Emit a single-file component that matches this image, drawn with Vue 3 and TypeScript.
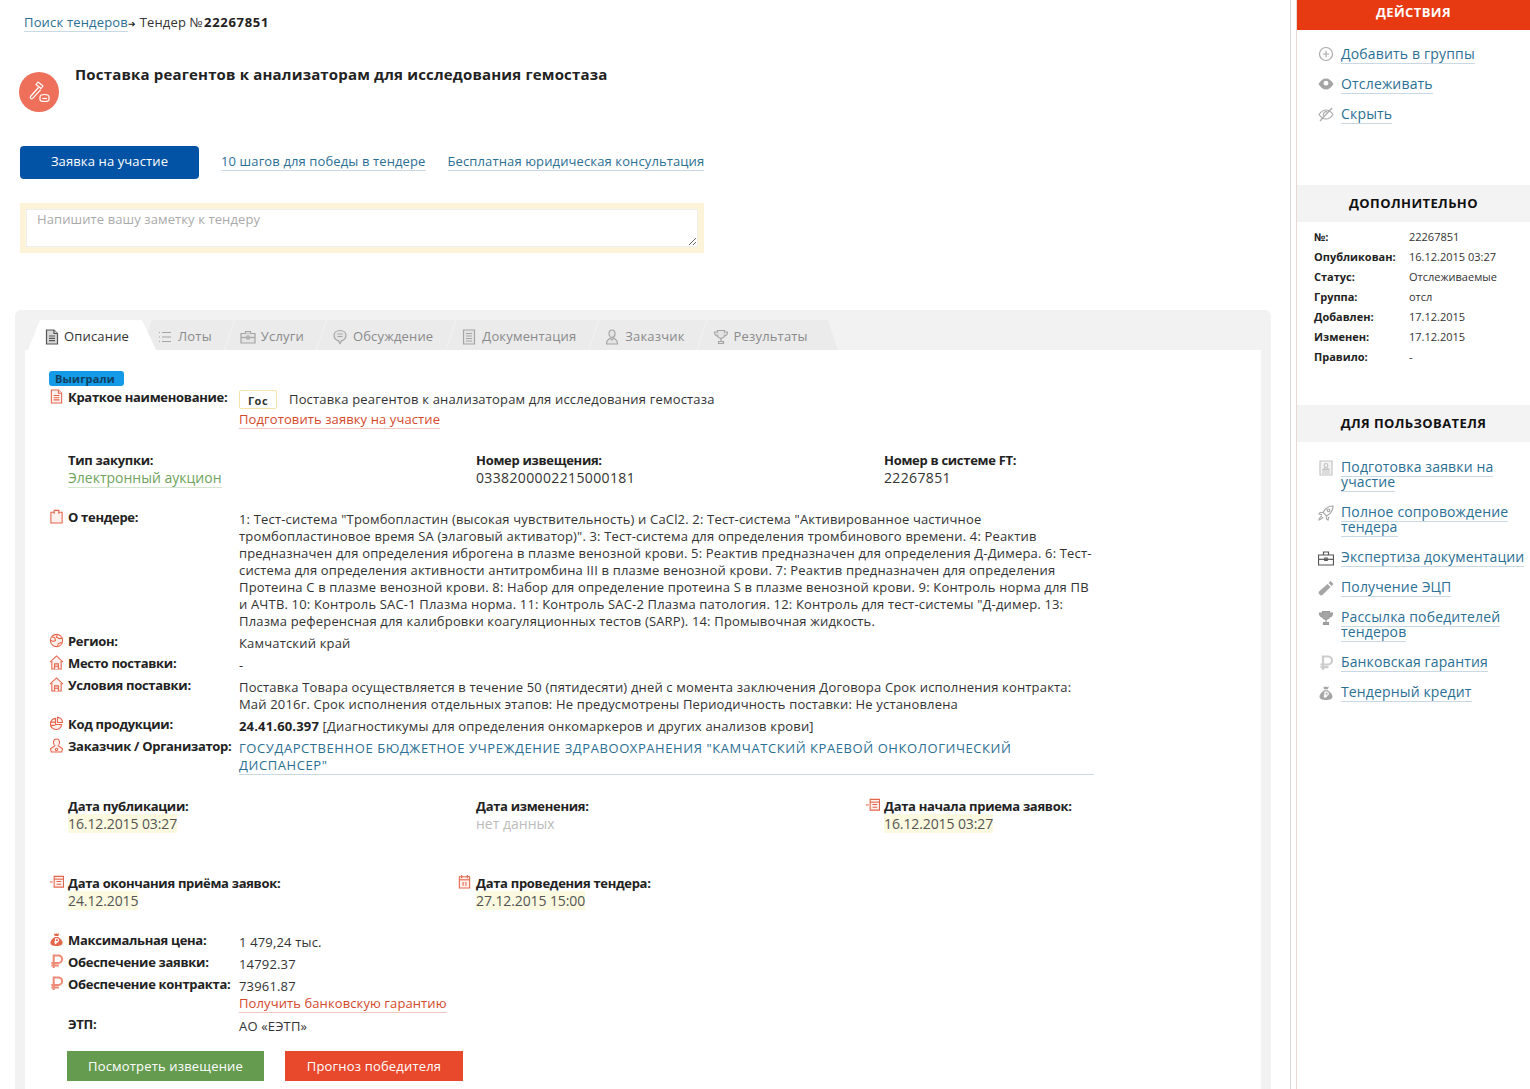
<script setup lang="ts">
const I: Record<string, string[]> = {
  doc: ['M2.500 1h7.500l3.500 3.500V15h-11z', 'M10 1v3.500h3.500', 'M5 7h6M5 9.300h6M5 11.600h6'],
  lots: ['M2 3.500h1M2 8h1M2 12.500h1', 'M5 3.500h9M5 8h9M5 12.500h9'],
  box: ['M1 4.500h14v9.500H1z', 'M5.500 4.500v-2h5v2', 'M1 8.500h14', 'M7 7h2v3H7z'],
  chat: ['M8 1.500c3.600 0 6 2.200 6 5s-2.400 5-4.500 5.400L8 14.500 6.500 11.900C4.400 11.500 2 9.300 2 6.500s2.400-5 6-5z', 'M5.500 5h5M5.500 7.500h5'],
  page: ['M2.500 1h11v14h-11z', 'M5 4.500h6M5 7h6M5 9.500h6M5 12h6'],
  user: ['M8 1c1.900 0 3 1.400 3 3.400S9.900 8.500 8 8.500 5 6.400 5 4.400 6.100 1 8 1z', 'M2.500 15c0-3.300 2-5 3.800-5.800L8 11l1.700-1.800c1.800.8 3.800 2.500 3.800 5.800z'],
  cup: ['M4.500 1.500h7v4c0 2.300-1.500 3.800-3.500 3.800S4.500 7.800 4.500 5.500z', 'M4.500 3H1.500c0 2.500 1.200 3.800 3.300 4M11.500 3h3c0 2.500-1.200 3.800-3.300 4', 'M8 9.300v3M5.500 14.500h5v-2h-5z'],
  globe: ['M8 1.500a6.500 6.500 0 1 0 0 13a6.500 6.500 0 0 0 0-13z', 'M3 4l3 1 1 3-2 1-3-1M9 1.800l-1 2.700 3 1.500 3.300-.5M9 14.300l1-3 2.500-1 1.500.8'],
  home: ['M1 7.500L8 1l7 6.500', 'M3 6v9h10V6', 'M6 15V9.500h4V15', 'M6 12h4'],
  pie: ['M7 2.500a6 6 0 1 0 6.500 6.500H7z', 'M9 1.500a5.500 5.500 0 0 1 5.500 5.500H9z', 'M1.500 6.500h5M1.500 10h5'],
  person: ['M8 1c2 0 3.200 1.500 3.200 3.500S10 9 8 9 4.800 6.500 4.800 4.500 6 1 8 1z', 'M6 8.500L1.500 11.500l1 3.500h11l1-3.500L10 8.500', 'M8 11a1.200 1.200 0 1 0 0 2.400A1.200 1.200 0 0 0 8 11z'],
  cal: ['M2.500 3h11v12h-11z', 'M5 1v3.500M11 1v3.500', 'M2.500 6.200h11', 'M6.500 8.500v4M9.500 8.500v4'],
  calin: ['M5.500 2.500h10v11.500h-10z', 'M5.500 5.500h10', 'M8 8h5M8 11h5', 'M4 8.500H1'],
  rub: ['M5 15V1.500h5a4 4 0 0 1 0 8H2.500M2.500 12.200h8'],
  plus: ['M8 1.500a6.500 6.500 0 1 0 0 13a6.500 6.500 0 0 0 0-13z', 'M8 4.800v6.400M4.800 8h6.400'],
  hide: ['M1 8.500c2-3 4.200-4.500 7-4.500s5 1.500 7 4.500c-2 3-4.200 4.500-7 4.500s-5-1.500-7-4.500z', 'M2 15L14 2', 'M5.500 10a3 3 0 0 1 4-4'],
  form: ['M2 1h12v14H2z', 'M8 3.500c1.100 0 1.800.8 1.800 1.800S9.100 7.500 8 7.500 6.200 6.300 6.200 5.300 6.900 3.500 8 3.500z', 'M5 9.500c.5-1 1.500-1.500 3-1.500s2.500.5 3 1.500z', 'M4 11h8M4 13h8'],
  rocket: ['M15 1c-4 0-7.500 2-10 6.500L8.500 11C13 8.500 15 5 15 1z', 'M5 7.500H2l-1 1.500 3 .8M8.500 11v3l1.500 1 .8-3', 'M4 11c-1.500.5-2.500 1.800-3 4 2.200-.5 3.500-1.500 4-3', 'M10.500 4a1.300 1.300 0 1 0 .01 0'],
  case: ['M.5 5h15v10H.5z', 'M5.500 5V2h5v3', 'M.5 9.300h15', 'M6.800 8h2.400v2.400H6.800z']
}
const bagBody = 'M5 1.200l1.800 1 1.200-1 1.200 1 1.800-1-1.200 3h-3.600zM6.300 5.200C3.500 7 1.500 9.300 1.500 11.500c0 2.500 2.500 3.500 6.500 3.500s6.500-1 6.500-3.500c0-2.200-2-4.500-4.800-6.300z'
const bagMark = 'M7 13V7.200h1.800a1.500 1.500 0 0 1 0 3H5.800M5.800 11.500h3.200'
const tabs = [
  { t: 'Описание', i: 'doc' }, { t: 'Лоты', i: 'lots' }, { t: 'Услуги', i: 'box' },
  { t: 'Обсуждение', i: 'chat' }, { t: 'Документация', i: 'page' }, { t: 'Заказчик', i: 'user' }, { t: 'Результаты', i: 'cup' }
]
const infoRows = [
  ['№:', '22267851'], ['Опубликован:', '16.12.2015 03:27'], ['Статус:', 'Отслеживаемые'], ['Группа:', 'отсл'],
  ['Добавлен:', '17.12.2015'], ['Изменен:', '17.12.2015'], ['Правило:', '-']
]
const userLinks = [
  { t: 'Подготовка заявки на участие', i: 'form' }, { t: 'Полное сопровождение тендера', i: 'rocket' },
  { t: 'Экспертиза документации', i: 'case' }, { t: 'Получение ЭЦП', i: 'usb' },
  { t: 'Рассылка победителей тендеров', i: 'cup' }, { t: 'Банковская гарантия', i: 'rub' }, { t: 'Тендерный кредит', i: 'bag' }
]
const desc = '1: Тест-система "Тромбопластин (высокая чувствительность) и CaCl2. 2: Тест-система "Активированное частичное тромбопластиновое время SA (элаговый активатор)". 3: Тест-система для определения тромбинового времени. 4: Реактив предназначен для определения иброгена в плазме венозной крови. 5: Реактив предназначен для определения Д-Димера. 6: Тест-система для определения активности антитромбина III в плазме венозной крови. 7: Реактив предназначен для определения Протеина С в плазме венозной крови. 8: Набор для определение протеина S в плазме венозной крови. 9: Контроль норма для ПВ и АЧТВ. 10: Контроль SAC-1 Плазма норма. 11: Контроль SAC-2 Плазма патология. 12: Контроль для тест-системы "Д-димер. 13: Плазма референсная для калибровки коагуляционных тестов (SARP). 14: Промывочная жидкость.'
</script>

<template>
  <div class="page">
    <main class="main">
      <div class="crumbs"><a class="lnk">Поиск тендеров</a><span class="arr">➔</span> Тендер №<b>22267851</b></div>
      <div class="head">
        <div class="circle">
          <svg viewBox="0 0 24 24" class="gavel" fill="none" stroke="#fff" stroke-width="1.200" stroke-linejoin="round">
            <path d="M11 2l5 4-2 2.500-5-4z" /><path d="M11.500 7.500L3.500 16.500c-1 1.300 1 3 2.200 1.800l8-8.600" />
            <path d="M13 17c0-1.500 2-2.500 4.500-2.500S22 15.500 22 17v2.500c0 1-2 2-4.500 2S13 20.500 13 19.500z" /><path d="M15.500 18.500h4.500" />
          </svg>
        </div>
        <h1 class="title">Поставка реагентов к анализаторам для исследования гемостаза</h1>
      </div>
      <div class="actions">
        <button class="btn-blue">Заявка на участие</button>
        <a class="lnk">10 шагов для победы в тендере</a>
        <a class="lnk">Бесплатная юридическая консультация</a>
      </div>
      <div class="note"><textarea placeholder="Напишите вашу заметку к тендеру"></textarea></div>

      <section class="card">
        <nav class="tabs">
          <div v-for="(x, n) in tabs" :key="x.t" class="tab" :class="{ active: n === 0 }">
            <svg viewBox="0 0 16 16" class="ti"><path v-for="d in I[x.i]" :key="d" :d="d" /></svg>{{ x.t }}
          </div>
        </nav>
        <div class="body">
          <div class="won">Выиграли</div>

          <div class="row first">
            <svg viewBox="0 0 16 16" class="ic"><path v-for="d in I.doc" :key="d" :d="d" /></svg>
            <b>Краткое наименование:</b>
            <div>
              <div class="gos-line"><span class="gos">Гос</span>Поставка реагентов к анализаторам для исследования гемостаза</div>
              <a class="lnk red">Подготовить заявку на участие</a>
            </div>
          </div>

          <div class="cols c1">
            <div class="col"><b>Тип закупки:</b><div class="big"><a class="lnk green">Электронный аукцион</a></div></div>
            <div class="col"><b>Номер извещения:</b><div class="big num">0338200002215000181</div></div>
            <div class="col"><b>Номер в системе FT:</b><div class="big num">22267851</div></div>
          </div>

          <div class="rows">
            <div class="row about">
              <svg viewBox="0 0 16 16" class="ic"><path d="M2 3.500h12v11.500H2z" /><path d="M5.500 5V1.500h5V5" /></svg>
              <b>О тендере:</b><div>{{ desc }}</div>
            </div>
            <div class="row"><svg viewBox="0 0 16 16" class="ic"><path v-for="d in I.globe" :key="d" :d="d" /></svg><b>Регион:</b><div>Камчатский край</div></div>
            <div class="row"><svg viewBox="0 0 16 16" class="ic"><path v-for="d in I.home" :key="d" :d="d" /></svg><b>Место поставки:</b><div>-</div></div>
            <div class="row"><svg viewBox="0 0 16 16" class="ic"><path v-for="d in I.home" :key="d" :d="d" /></svg><b>Условия поставки:</b><div>Поставка Товара осуществляется в течение 50 (пятидесяти) дней с момента заключения Договора Срок исполнения контракта: Май 2016г. Срок исполнения отдельных этапов: Не предусмотрены Периодичность поставки: Не установлена</div></div>
            <div class="row"><svg viewBox="0 0 16 16" class="ic"><path v-for="d in I.pie" :key="d" :d="d" /></svg><b>Код продукции:</b><div><strong>24.41.60.397</strong> [Диагностикумы для определения онкомаркеров и других анализов крови]</div></div>
            <div class="row"><svg viewBox="0 0 16 16" class="ic"><path v-for="d in I.person" :key="d" :d="d" /></svg><b>Заказчик / Организатор:</b><div class="org">ГОСУДАРСТВЕННОЕ БЮДЖЕТНОЕ УЧРЕЖДЕНИЕ ЗДРАВООХРАНЕНИЯ "КАМЧАТСКИЙ КРАЕВОЙ ОНКОЛОГИЧЕСКИЙ ДИСПАНСЕР"</div></div>
          </div>

          <div class="cols c2">
            <div class="col"><b>Дата публикации:</b><div class="big"><mark>16.12.2015 03:27</mark></div></div>
            <div class="col"><b>Дата изменения:</b><div class="big none">нет данных</div></div>
            <div class="col"><svg viewBox="0 0 16 16" class="ic abs"><path v-for="d in I.calin" :key="d" :d="d" /></svg><b>Дата начала приема заявок:</b><div class="big"><mark>16.12.2015 03:27</mark></div></div>
          </div>
          <div class="cols c3">
            <div class="col"><svg viewBox="0 0 16 16" class="ic abs"><path v-for="d in I.calin" :key="d" :d="d" /></svg><b>Дата окончания приёма заявок:</b><div class="big"><mark>24.12.2015</mark></div></div>
            <div class="col"><svg viewBox="0 0 16 16" class="ic abs"><path v-for="d in I.cal" :key="d" :d="d" /></svg><b>Дата проведения тендера:</b><div class="big"><mark>27.12.2015 15:00</mark></div></div>
          </div>

          <div class="rows money">
            <div class="row"><svg viewBox="0 0 16 16" class="ic solid"><path :d="bagBody" /><path class="mark" :d="bagMark" /></svg><b>Максимальная цена:</b><div>1 479,24 тыс.</div></div>
            <div class="row"><svg viewBox="0 0 16 16" class="ic rubi"><path v-for="d in I.rub" :key="d" :d="d" /></svg><b>Обеспечение заявки:</b><div>14792.37</div></div>
            <div class="row"><svg viewBox="0 0 16 16" class="ic rubi"><path v-for="d in I.rub" :key="d" :d="d" /></svg><b>Обеспечение контракта:</b><div>73961.87<br /><a class="lnk red get">Получить банковскую гарантию</a></div></div>
            <div class="row"><i></i><b>ЭТП:</b><div>АО «ЕЭТП»</div></div>
          </div>

          <div class="btns">
            <button class="b-green">Посмотреть извещение</button>
            <button class="b-red">Прогноз победителя</button>
          </div>
        </div>
      </section>
    </main>

    <aside class="side">
      <h2 class="red-h">ДЕЙСТВИЯ</h2>
      <ul class="acts">
        <li><svg viewBox="0 0 16 16" class="si"><path v-for="d in I.plus" :key="d" :d="d" /></svg><a class="lnk">Добавить в группы</a></li>
        <li>
          <svg viewBox="0 0 16 16" class="si fillg"><path d="M0.500 8C2.500 4.500 5 2.500 8 2.500S13.500 4.500 15.500 8c-2 3.500-4.500 5.500-7.500 5.500S2.500 11.500 0.500 8z" /><circle cx="8" cy="7.200" r="2.400" fill="#fff" /></svg>
          <a class="lnk">Отслеживать</a>
        </li>
        <li><svg viewBox="0 0 16 16" class="si"><path v-for="d in I.hide" :key="d" :d="d" /></svg><a class="lnk">Скрыть</a></li>
      </ul>

      <h2 class="gray-h extra">ДОПОЛНИТЕЛЬНО</h2>
      <dl class="info">
        <template v-for="r in infoRows" :key="r[0]"><dt>{{ r[0] }}</dt><dd>{{ r[1] }}</dd></template>
      </dl>

      <h2 class="gray-h forus">ДЛЯ ПОЛЬЗОВАТЕЛЯ</h2>
      <ul class="ulinks">
        <li v-for="u in userLinks" :key="u.t">
          <svg v-if="u.i === 'usb'" viewBox="0 0 16 16" class="si fillg"><path d="M1 11.500L9.500 4l3 3L4.500 15c-1 .8-2 .6-3-.4S.3 12.500 1 11.500z" /><path d="M10.500 3l2-2 3 3-2 2z" /></svg>
          <svg v-else-if="u.i === 'bag'" viewBox="0 0 16 16" class="si fillg"><path :d="bagBody" /><path class="mark" :d="bagMark" /></svg>
          <svg v-else viewBox="0 0 16 16" class="si" :class="{ dark: u.i === 'case', cupg: u.i === 'cup', rubg: u.i === 'rub', pale: u.i === 'form' }"><path v-for="d in I[u.i]" :key="d" :d="d" /></svg>
          <div class="ut"><a class="lnk">{{ u.t }}</a></div>
        </li>
      </ul>
    </aside>
  </div>
</template>

<style>
html, body { margin: 0; background: #fff; }
</style>

<style scoped>
.page { display: flex; height: 1089px; overflow: hidden; background: #fff; color: #333; font: 13px/17px "Open Sans", "Noto Sans", sans-serif; letter-spacing: .17px; }
b, strong { font-weight: 700; color: #222; }
.body b { letter-spacing: -.3px; }
.lnk { color: #2b6f94; border-bottom: 1px solid #c9d8e2; }
.lnk.red { color: #d4492c; border-bottom-color: #efc9c0; letter-spacing: .1px; }
.lnk.green { color: #6ea35c; border-bottom-color: #d5e4cf; letter-spacing: 0; }
.main { width: 1291px; flex: none; box-sizing: border-box; padding: 14px 20px 0 15px; border-right: 1px solid #d9d9d9; }
.crumbs { padding-left: 9px; }
.crumbs b { letter-spacing: .7px; margin-left: 1px; }
.arr { font-size: 9px; margin-right: 0; color: #222; }
.head { display: flex; align-items: flex-start; margin: 30px 0 0 4px; height: 47px; }
.circle { width: 40px; height: 40px; border-radius: 50%; background: #ee705b; display: flex; align-items: center; justify-content: center; margin-top: 10px; flex: none; }
.gavel { width: 24px; height: 24px; }
.title { margin: 2px 0 0 16px; font-size: 15px; line-height: 20px; font-weight: 700; color: #222; }
.actions { display: flex; align-items: center; margin: 37px 0 0 5px; gap: 22px; letter-spacing: .12px; }
.actions .lnk { margin-top: -2px; }
.btn-blue { width: 179px; height: 33px; border: 0; border-radius: 4px; background: #0253a6; color: #fff; font: inherit; letter-spacing: inherit; padding: 0 0 2px; }
.note { margin: 24px 0 0 5px; width: 684px; height: 50px; box-sizing: border-box; padding: 6px; background: #fdf3d9; display: flex; }
.note textarea { flex: 1; box-sizing: border-box; border: 1px solid #eee; padding: 1px 10px; font: inherit; letter-spacing: .1px; background: #fff; }
.note textarea::placeholder { color: #aaa; }
.card { margin-top: 57px; width: 1256px; box-sizing: border-box; padding: 10px 10px 0; background: #f2f2f3; border-radius: 6px 6px 0 0; height: 800px; }
.tabs { display: flex; height: 30px; padding-left: 3px; }
.tab { position: relative; z-index: 0; display: flex; align-items: center; gap: 5px; padding: 3px 22px 0 15px; margin-right: -9px; color: #8a8a8a; white-space: nowrap; }
.tab::before { content: ""; position: absolute; z-index: -1; inset: 0; background: #ebebec; clip-path: polygon(10px 0, 100% 0, calc(100% - 10px) 100%, 0 100%); }
.tab:last-child { padding-right: 30px; }
.tab:last-child::before { clip-path: polygon(10px 0, calc(100% - 10px) 0, 100% 100%, 0 100%); }
.tab.active { z-index: 1; color: #333; padding: 3px 27px 0 16px; margin-right: -14px; gap: 4px; }
.tab.active::before { background: #fff; clip-path: polygon(12px 0, calc(100% - 14px) 0, 100% 100%, 0 100%); }
.ti { width: 16px; height: 16px; flex: none; fill: #e4e4e4; stroke: #a5a5a5; stroke-width: 1.200; }
.active .ti { fill: #d8d8d8; stroke: #555; }
.body { background: #fff; padding: 21px 24px 0; height: 760px; }
.won { width: 75px; height: 15px; box-sizing: border-box; border-radius: 3px; background: #149ae6; color: #10405f; font-size: 11px; line-height: 15px; font-weight: 700; padding-left: 6px; }
.row { display: grid; grid-template-columns: 19px 171px 855px; }
.row > b { margin-top: -2px; white-space: nowrap; }
.ic { width: 15px; height: 15px; fill: #fdf0ed; stroke: #e5654b; stroke-width: 1.150; margin-top: -2px; }
.ic.rubi { fill: none; stroke: #ee8a75; stroke-width: 2.200; }
.ic.solid { fill: #e5654b; stroke: none; }
.mark { fill: none; stroke: #fff; stroke-width: 1.200; }
.first { margin-top: 5px; }
.gos-line { height: 20px; display: flex; align-items: flex-start; }
.gos { display: inline-block; width: 38px; height: 19px; box-sizing: border-box; border: 1px solid #f6e3a9; border-radius: 2px; margin-top: -1px; text-align: center; font-weight: 700; font-size: 11px; line-height: 20px; letter-spacing: .5px; margin-right: 12px; }
.cols { display: grid; grid-template-columns: repeat(3, 408px); }
.col { position: relative; padding-left: 19px; }
.big { font-size: 14px; line-height: 18px; }
.num { letter-spacing: .37px; }
.c1 { margin-top: 24px; }
.rows { display: flex; flex-direction: column; gap: 5px; }
.rows > .about { margin-top: 24px; }
.org { color: #2b6f94; border-bottom: 1px solid #c9d8e2; letter-spacing: .58px; }
.c2 { margin-top: 23px; }
.c3 { margin-top: 42px; }
.none { color: #bbb; letter-spacing: 0; }
mark { background: #fbf9e0; color: #555; letter-spacing: -.1px; }
.abs { position: absolute; left: 0; top: 1px; }
.money { margin-top: 24px; }
.get { display: inline-block; line-height: 17px; }
.btns { display: flex; gap: 21px; margin: 16px 0 0 18px; }
.btns button { height: 30px; border: 0; color: #fff; font: inherit; letter-spacing: inherit; }
.b-green { width: 197px; background: #659b4f; }
.b-red { width: 178px; background: #e8482b; }

.side { flex: 1; border-left: 1px solid #e8d8d4; margin-left: 5px; }
h2 { margin: 0; text-align: center; font-size: 13px; font-weight: 700; letter-spacing: .4px; }
.red-h { height: 30px; background: #e73a12; color: #fff; line-height: 24px; }
.acts { list-style: none; margin: 0; padding: 15px 0 0 21px; height: 140px; box-sizing: border-box; }
.acts li, .ulinks li { display: flex; align-items: flex-start; }
.acts li { height: 30px; font-size: 14px; line-height: 18px; }
.si { width: 16px; height: 16px; flex: none; fill: none; stroke: #aaa; stroke-width: 1.200; margin-right: 7px; margin-top: 1px; }
.si.fillg { fill: #a5a5a5; stroke: none; }
.si.dark { stroke: #555; }
.si.cupg { fill: #a5a5a5; stroke: #999; }
.si.rubg { stroke: #ccc; stroke-width: 2.200; }
.si.pale { fill: #f4f4f4; stroke: #c4c4c4; }
.gray-h { height: 37px; background: #f3f3f3; line-height: 37px; color: #111; }
.extra { margin-top: 15px; }
.info { display: grid; grid-template-columns: 95px 1fr; margin: 5px 0 0 17px; font-size: 11px; line-height: 20px; letter-spacing: 0; }
.info dt { font-weight: 700; color: #222; }
.info dd { margin: 0; }
.forus { margin-top: 38px; }
.ulinks { list-style: none; margin: 0; padding: 17px 0 0 21px; font-size: 14px; line-height: 15px; letter-spacing: .14px; }
.ulinks li { margin-bottom: 15px; }
.ulinks .si { margin-bottom: -2px; }
.ut { width: 185px; }
</style>
